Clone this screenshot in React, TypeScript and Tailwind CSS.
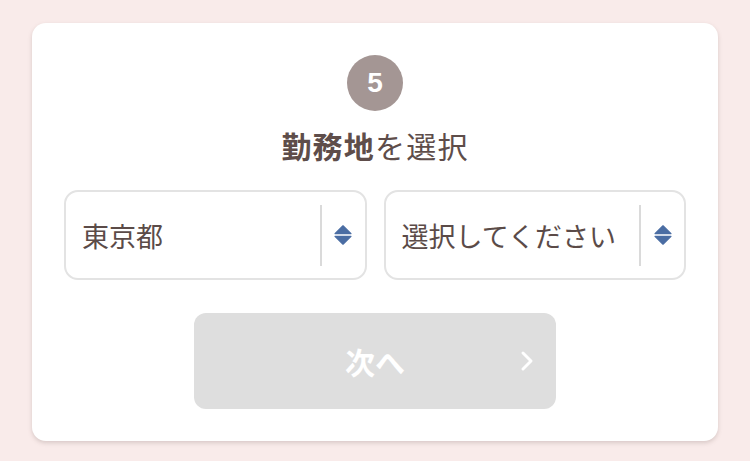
import React from 'react';

const font = { fontFamily: '"Noto Sans CJK JP", "Noto Sans", sans-serif' };

const SortArrows: React.FC = () => (
  <svg width="18" height="20" viewBox="0 0 18 20" fill="#4a6da3">
    <path d="M9 0.8 L17 8.6 L1 8.6 Z" strokeLinejoin="round" stroke="#4a6da3" strokeWidth="1.2" />
    <path d="M1 11.4 L17 11.4 L9 19.2 Z" strokeLinejoin="round" stroke="#4a6da3" strokeWidth="1.2" />
  </svg>
);

interface SelectBoxProps {
  label: string;
}

const SelectBox: React.FC<SelectBoxProps> = ({ label }) => (
  <div className="flex h-[90px] flex-1 items-center rounded-[14px] border-2 border-[#e3e3e3] bg-white">
    <span className="flex-1 pl-[16px] text-[27px] leading-none text-[#5b4b48]">{label}</span>
    <div className="h-[61px] w-[2px] bg-[#dadada]" />
    <div className="flex w-[43px] items-center justify-center">
      <SortArrows />
    </div>
  </div>
);

export default function App() {
  return (
    <div className="min-h-[461px] w-[750px] bg-[#f9ebea] px-8 pt-[23px]" style={font}>
      <div className="flex h-[418px] flex-col items-center rounded-[14px] bg-white px-8 pt-8 shadow-[0_2px_4px_rgba(120,100,95,0.25)]">
        <div
          className="flex h-[56px] w-[56px] items-center justify-center rounded-full bg-[#a49694] text-[28px] font-semibold text-white"
          style={{ fontFamily: '"Liberation Sans", "Noto Sans", sans-serif' }}
        >
          5
        </div>
        <h2 className="mt-[13px] text-[30px] leading-[42px] tracking-[0.04em] text-[#5e4d4a]">
          <span className="font-bold">勤務地</span>を選択
        </h2>
        <div className="mt-[24px] flex w-full gap-[17px]">
          <SelectBox label="東京都" />
          <SelectBox label="選択してください" />
        </div>
        <button
          type="button"
          disabled
          className="relative mt-[33px] flex h-[96px] w-[362px] items-center justify-center rounded-[12px] bg-[#dedede] text-[30px] font-bold text-white"
        >
          次へ
          <svg className="absolute right-[22px] top-[37px]" width="14" height="22" viewBox="0 0 14 22" fill="none">
            <path d="M3 3 L11 11 L3 19" stroke="white" strokeWidth="3" strokeLinecap="round" strokeLinejoin="round" />
          </svg>
        </button>
      </div>
    </div>
  );
}
